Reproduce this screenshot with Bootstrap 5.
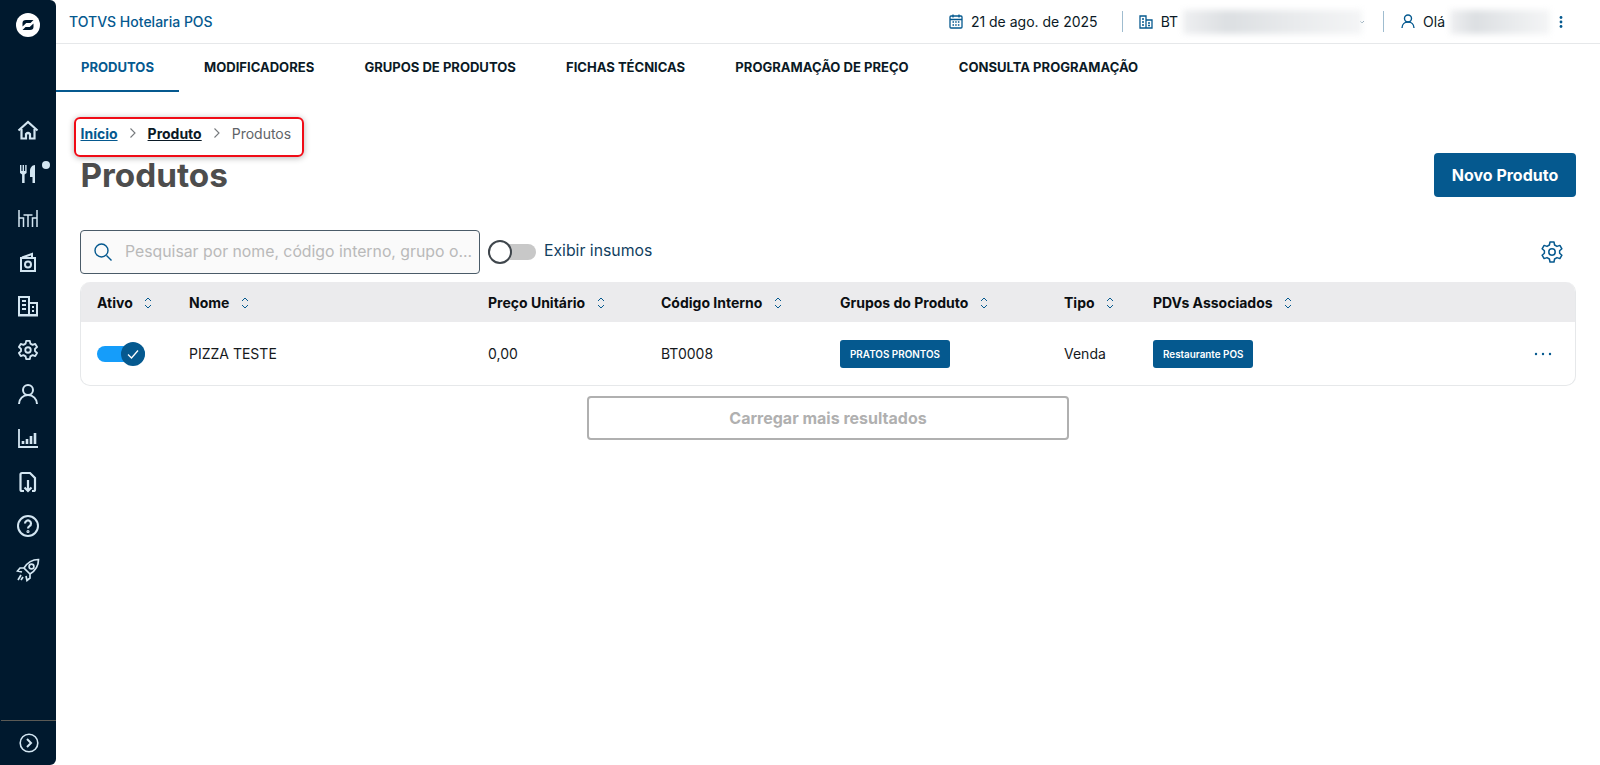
<!DOCTYPE html>
<html lang="pt-BR">
<head>
  <meta charset="UTF-8">
  <title>Produtos</title>
  <link href="https://cdn.jsdelivr.net/npm/bootstrap@5.3.3/dist/css/bootstrap.min.css" rel="stylesheet">
  <style>
    html, body { height: 100%; }
    body { font-family: Inter, "Liberation Sans", sans-serif; color: #0b1a26; overflow: hidden; background: #fff; }
    .app-shell { height: 765px; }
    .side-rail { width: 56px; flex: 0 0 56px; background: #00192e; border-radius: 0 6px 6px 0; color: #d3e6f2; }
    .side-logo { height: 50px; }
    .side-menu { padding-top: 58px; }
    .side-item { height: 44px; position: relative; }
    .side-dot { position: absolute; top: 9px; left: 42px; width: 8px; height: 8px; border-radius: 50%; background: #d3e6f2; }
    .side-foot { height: 45px; border-top: 1px solid #5b5a55; margin-left: 1px; }
    .main-area { min-width: 0; position: relative; }
    .top-bar { height: 44px; border-bottom: 1px solid #e6e8ea; padding: 0 37px 0 13px; font-size: 14px; }
    .app-name { color: #05598f; font-size: 14px; font-weight: 500; }
    .top-sep { width: 1px; height: 21px; background: #9fbccf; }
    .blur-box { height: 24px; background: linear-gradient(90deg, #eeeff1, #dcdfe2 25%, #e8eaec 60%, #f4f5f6); filter: blur(3px); }
    .blur-org { width: 179px; margin-left: 5px; }
    .blur-user { width: 100px; margin-left: 5px; }
    .tab-row { height: 48px; }
    .tab-row .nav-link { font-size: 13.05px; font-weight: 700; color: #0b1a26; padding: 0 25.1px; height: 48px; line-height: 46px; border-bottom: 2px solid transparent; border-radius: 0; }
    .tab-row .nav-link.active { color: #05598f; border-bottom-color: #05598f; padding: 0 25px; }
    .content-pad { padding: 0 24px 0 24px; }
    .crumb-row { padding-top: 31px; height: 62px; font-size: 14px; margin: 0; padding-left: .5px; }
    .crumb-row a { font-weight: 700; color: #0b1a26; text-decoration: underline; }
    .crumb-row a.first-crumb { color: #05598f; }
    .crumb-now { color: #5f6468; }
    .crumb-sep { margin: 4px 9px 0; }
    .red-mark { position: absolute; left: 18px; top: 117px; width: 230px; height: 40px; border: 2px solid #f00c17; border-radius: 6px; box-shadow: 0 1px 6px rgba(0,0,0,.3); }
    .page-title { font-size: 33.3px; font-weight: 700; color: #4d4d4d; margin: 8px 0 0 .5px; line-height: 44px; }
    .title-row { margin-top: -9px; height: 72px; }
    .new-btn { background: #05598f; border: 0; color: #fff; font-weight: 700; font-size: 16px; width: 142px; height: 44px; border-radius: 4px; margin-top: 8px; }
    .new-btn:hover { background: #05598f; color: #fff; }
    .tool-row { margin-top: 13px; height: 44px; }
    .search-wrap { width: 400px; height: 44px; border: 1px solid #4a5b68; border-radius: 4px; padding: 0 6px 0 12px; background: #fafafa; }
    .search-wrap input { border: 0; background: transparent; outline: 0; font-size: 15.8px; flex: 1; min-width: 0; padding: 0; }
    .search-wrap input::placeholder { color: #b9b9b9; }
    .toggle-off { width: 48px; height: 16px; margin-left: 8px; background: #c8c8c8; border-radius: 8px; position: relative; }
    .toggle-knob { position: absolute; left: 0; top: -4px; width: 24px; height: 24px; border-radius: 50%; background: #fff; border: 2px solid #3f464c; }
    .toggle-label { font-size: 15.8px; color: #123f5f; margin-left: 8px; margin-top: -3px; }
    .gear-btn { margin-right: 12px; }
    .grid-box { margin-top: 8px; border: 1px solid #e6e8ea; border-top: 0; border-radius: 10px; overflow: hidden; }
    .grid-table { table-layout: fixed; width: 100%; margin: 0; }
    .grid-table th { background: #ebebed; font-size: 14px; font-weight: 700; height: 40px; padding: 0 0 0 16px; vertical-align: middle; border: 0; color: #0b0f12; }
    .grid-table td { font-size: 14px; height: 63px; padding: 0 0 0 16px; vertical-align: middle; border: 0; color: #15191c; }
    .sort-ico { margin-left: 8px; vertical-align: -2px; }
    .grid-tag { background: #05598f; color: #fff; font-size: 9.9px; font-weight: 600; height: 28px; line-height: 28px; border-radius: 3px; display: inline-block; padding: 0 10px; }
    .on-toggle { width: 48px; height: 16px; background: #159dfa; border-radius: 8px; position: relative; }
    .on-knob { position: absolute; left: 24px; top: -4px; width: 24px; height: 24px; border-radius: 50%; background: #05598f; display: flex; align-items: center; justify-content: center; }
    .row-more { margin-right: 23px; }
    .load-btn { width: 482px; height: 44px; border: 2px solid #b0b0b0; border-radius: 4px; background: #fff; color: #b0b0b0; font-weight: 700; font-size: 16px; margin: 10px auto 0 507px; display: block; }
  </style>
</head>
<body>
  <div class="app-shell d-flex">
    <aside class="side-rail d-flex flex-column">
      <div class="side-logo d-flex align-items-center justify-content-center">
        <svg width="24" height="24" viewBox="0 0 24 24"><circle cx="12" cy="12" r="12" fill="#fff"/><path d="M6.500 13.500V10Q6.500 7 10 7h7.500l-3 3H10.300z" fill="#00192e"/><path d="M6.500 13.500V10Q6.500 7 10 7h7.500l-3 3H10.300z" fill="#00192e" transform="rotate(180 12 12)"/></svg>
      </div>
      <div class="side-menu d-flex flex-column flex-grow-1">
        <div class="side-item d-flex align-items-center justify-content-center">
          <svg width="22" height="22" viewBox="0 0 22 22" fill="none" stroke="#d3e6f2" stroke-width="2.200"><path d="M1.500 11.500 11 3l9.500 8.500"/><path d="M4.500 10v9.500H9V15q2-2 4 0v4.500h4.500V10"/></svg>
        </div>
        <div class="side-item d-flex align-items-center justify-content-center">
          <svg width="22" height="22" viewBox="0 0 22 22" fill="#d3e6f2"><path d="M3 2h1.400v6h1.200V2H7v6h1.200V2h1.400v8l-2 1.500V20H5.100v-8.500L3 10z"/><path d="M18 2v18h-2.500v-6H13V8c0-3 2-6 5-6z"/></svg>
          <span class="side-dot"></span>
        </div>
        <div class="side-item d-flex align-items-center justify-content-center">
          <svg width="22" height="22" viewBox="0 0 22 22" fill="none" stroke="#d3e6f2" stroke-width="1.500"><path d="M2 3v17M2 11h4.500v9M20 3v17M20 11h-4.500v9M6.500 8h9M11 8v12"/></svg>
        </div>
        <div class="side-item d-flex align-items-center justify-content-center">
          <svg width="22" height="22" viewBox="0 0 22 22" fill="none" stroke="#d3e6f2" stroke-width="2"><path d="M4 7h14v13H4z"/><path d="M5 6.500 15 3v4"/><circle cx="11" cy="13.500" r="3"/></svg>
        </div>
        <div class="side-item d-flex align-items-center justify-content-center">
          <svg width="22" height="22" viewBox="0 0 22 22" fill="none" stroke="#d3e6f2" stroke-width="2"><path d="M2 20V2h10v18zM12 8h8v12h-8M1 20.500h20"/><path d="M5 6h4M5 10h4M5 14h4M15 12h2M15 16h2" stroke-width="1.800"/></svg>
        </div>
        <div class="side-item d-flex align-items-center justify-content-center">
          <svg width="22" height="22" viewBox="0 0 24 24" fill="none" stroke="#d3e6f2" stroke-width="2"><circle cx="12" cy="12" r="3"/><path d="M10 2h4l.6 3 2.400 1.400 2.900-1 2 3.400-2.300 2v2.400l2.300 2-2 3.400-2.900-1-2.400 1.400-.6 3h-4l-.6-3L7 17.600l-2.900 1-2-3.400 2.300-2v-2.400l-2.300-2 2-3.400 2.900 1L9.400 5z" stroke-linejoin="round"/></svg>
        </div>
        <div class="side-item d-flex align-items-center justify-content-center">
          <svg width="22" height="22" viewBox="0 0 22 22" fill="none" stroke="#d3e6f2" stroke-width="2"><circle cx="11" cy="7" r="5"/><path d="M2 21c0-5 4-9 9-9s9 4 9 9"/></svg>
        </div>
        <div class="side-item d-flex align-items-center justify-content-center">
          <svg width="22" height="22" viewBox="0 0 22 22" fill="none" stroke="#d3e6f2"><path d="M2 2v18h19" stroke-width="1.800"/><path d="M6 17v-3M10 17v-5M14 17V9M18 17V6" stroke-width="2.600"/></svg>
        </div>
        <div class="side-item d-flex align-items-center justify-content-center">
          <svg width="22" height="22" viewBox="0 0 22 22" fill="none" stroke="#d3e6f2" stroke-width="2.200"><path d="M7 20H5a1.500 1.500 0 0 1-1.500-1.500v-15A1.500 1.500 0 0 1 5 2h8l5 5v11.500a1.500 1.500 0 0 1-1.500 1.500H15"/><path d="M11 9v11M7.500 16.500 11 20l3.500-3.500"/></svg>
        </div>
        <div class="side-item d-flex align-items-center justify-content-center">
          <svg width="24" height="24" viewBox="0 0 24 24" fill="none" stroke="#d3e6f2" stroke-width="2"><circle cx="12" cy="12" r="10"/><path d="M9 9.500a3 3 0 1 1 4.500 2.600c-1 .6-1.500 1.200-1.500 2.400" stroke-width="2.200"/><circle cx="12" cy="17.500" r=".6"/></svg>
        </div>
        <div class="side-item d-flex align-items-center justify-content-center">
          <svg width="24" height="24" viewBox="0 0 24 24" fill="none" stroke="#d3e6f2" stroke-width="1.700"><path d="M22.500 1.500c-6 0-10.500 2-14.500 8.500l6 6c6.500-4 8.500-8.500 8.500-14.500zM8 10H4l-2.500 3 4.500 1M14 16v4l-3 2.500-1-4.500M5 17l-3 5M7 19l-2 3"/><circle cx="15.500" cy="8.500" r="2.400"/></svg>
        </div>
      </div>
      <div class="side-foot d-flex align-items-center justify-content-center">
        <svg width="20" height="20" viewBox="0 0 20 20" fill="none" stroke="#d3e6f2" stroke-width="2"><circle cx="10" cy="10" r="8.800" stroke-width="1.600"/><path d="M8 6l4 4-4 4"/></svg>
      </div>
    </aside>

    <div class="main-area flex-grow-1">
      <header class="top-bar d-flex align-items-center">
        <span class="app-name">TOTVS Hotelaria POS</span>
        <div class="ms-auto d-flex align-items-center">
          <svg width="14" height="15" viewBox="0 0 14 15" fill="none" stroke="#05598f" stroke-width="1.300" class="me-2"><rect x="1" y="2" width="12" height="12" rx="1"/><path d="M1 5.500h12M4 .5v3M10 .5v3"/><path d="M3.500 8h7M3.500 11h7" stroke-dasharray="1.500 1.200"/></svg>
          <span>21 de ago. de 2025</span>
          <span class="top-sep ms-4"></span>
          <svg width="14" height="14" viewBox="0 0 14 14" fill="none" stroke="#05598f" stroke-width="1.300" class="ms-3"><path d="M1 13V1h6v12zM7 5h6v8H7M3 4h2M3 7h2M3 10h2M9 8h2M9 10.500h2"/></svg>
          <span class="ms-2">BT</span>
          <span class="blur-box blur-org"></span>
          <svg width="6" height="4" viewBox="0 0 6 4" fill="none" stroke="#6f8da3" style="margin-left:-3px"><path d="M1 1l2 2 2-2"/></svg>
          <span class="top-sep" style="margin-left:18px"></span>
          <svg width="14" height="15" viewBox="0 0 14 15" fill="none" stroke="#05598f" stroke-width="1.400" style="margin-left:17px"><circle cx="7" cy="4.500" r="3.500"/><path d="M1 14c0-3.500 2.500-6 6-6s6 2.500 6 6"/></svg>
          <span class="ms-2">Olá</span>
          <span class="blur-box blur-user"></span>
          <svg width="4" height="14" viewBox="0 0 4 14" fill="#05598f" style="margin-left:9px"><circle cx="2" cy="2.500" r="1.400"/><circle cx="2" cy="7" r="1.400"/><circle cx="2" cy="11.500" r="1.400"/></svg>
        </div>
      </header>

      <ul class="nav tab-row">
        <li class="nav-item"><a class="nav-link active" href="#">PRODUTOS</a></li>
        <li class="nav-item"><a class="nav-link" href="#">MODIFICADORES</a></li>
        <li class="nav-item"><a class="nav-link" href="#">GRUPOS DE PRODUTOS</a></li>
        <li class="nav-item"><a class="nav-link" href="#">FICHAS TÉCNICAS</a></li>
        <li class="nav-item"><a class="nav-link" href="#">PROGRAMAÇÃO DE PREÇO</a></li>
        <li class="nav-item"><a class="nav-link" href="#">CONSULTA PROGRAMAÇÃO</a></li>
      </ul>

      <div class="red-mark"></div>

      <main class="content-pad">
        <nav class="crumb-row d-flex align-items-start">
          <a class="first-crumb" href="#">Início</a>
          <svg class="crumb-sep" width="12" height="12" viewBox="0 0 12 12" fill="none" stroke="#75797c" stroke-width="1.100"><path d="M3.500 1.500 8 6l-4.500 4.500"/></svg>
          <a href="#">Produto</a>
          <svg class="crumb-sep" width="12" height="12" viewBox="0 0 12 12" fill="none" stroke="#75797c" stroke-width="1.100"><path d="M3.500 1.500 8 6l-4.500 4.500"/></svg>
          <span class="crumb-now">Produtos</span>
        </nav>

        <div class="title-row d-flex justify-content-between align-items-start">
          <h1 class="page-title">Produtos</h1>
          <button class="btn new-btn" type="button">Novo Produto</button>
        </div>

        <div class="tool-row d-flex align-items-center">
          <label class="search-wrap d-flex align-items-center gap-2 mb-0">
            <svg width="20" height="20" viewBox="0 0 20 20" fill="none" stroke="#05598f" stroke-width="1.400" class="me-1"><circle cx="8.500" cy="8.500" r="6.500"/><path d="M13.500 13.500 18.500 18.500"/></svg>
            <input type="text" placeholder="Pesquisar por nome, código interno, grupo o...">
          </label>
          <div class="toggle-off"><span class="toggle-knob"></span></div>
          <span class="toggle-label">Exibir insumos</span>
          <svg class="ms-auto gear-btn" width="24" height="24" viewBox="0 0 24 24" fill="none" stroke="#05598f" stroke-width="1.500"><circle cx="12" cy="12" r="3.200"/><path d="M10 2h4l.6 3 2.400 1.400 2.900-1 2 3.400-2.300 2v2.400l2.300 2-2 3.400-2.900-1-2.400 1.400-.6 3h-4l-.6-3L7 17.600l-2.900 1-2-3.400 2.300-2v-2.400l-2.300-2 2-3.400 2.900 1L9.400 5z" stroke-linejoin="round"/></svg>
        </div>

        <div class="grid-box">
          <table class="table grid-table">
            <colgroup><col style="width:92px"><col style="width:299px"><col style="width:173px"><col style="width:179px"><col style="width:224px"><col style="width:89px"><col></colgroup>
            <thead>
              <tr id="gridHead"></tr>
            </thead>
            <tbody>
              <tr>
                <td><div class="on-toggle"><span class="on-knob"><svg width="14" height="14" viewBox="0 0 14 14" fill="none" stroke="#fff" stroke-width="1.300"><path d="M2 7.500 5.500 11 12 3.500"/></svg></span></div></td>
                <td>PIZZA TESTE</td>
                <td>0,00</td>
                <td>BT0008</td>
                <td><span class="grid-tag">PRATOS PRONTOS</span></td>
                <td>Venda</td>
                <td>
                  <div class="d-flex justify-content-between align-items-center">
                    <span class="grid-tag">Restaurante POS</span>
                    <svg class="row-more" width="18" height="4" viewBox="0 0 18 4" fill="#05598f"><circle cx="2" cy="2" r="1.200"/><circle cx="9" cy="2" r="1.200"/><circle cx="16" cy="2" r="1.200"/></svg>
                  </div>
                </td>
              </tr>
            </tbody>
          </table>
        </div>

        <button class="load-btn" type="button">Carregar mais resultados</button>
      </main>
    </div>
  </div>

  <script>
    // Table header cells share the same sort arrows
    const headers = ['Ativo', 'Nome', 'Preço Unitário', 'Código Interno', 'Grupos do Produto', 'Tipo', 'PDVs Associados'];
    const sortIcon = '<svg class="sort-ico" width="8" height="14" viewBox="0 0 8 14" fill="none" stroke="#05598f" stroke-width="1"><path d="M1 5 4 2l3 3M1 9l3 3 3-3"/></svg>';
    document.getElementById('gridHead').innerHTML = headers.map(h => `<th>${h} ${sortIcon}</th>`).join('');
  </script>
  <script src="https://cdn.jsdelivr.net/npm/bootstrap@5.3.3/dist/js/bootstrap.bundle.min.js"></script>
</body>
</html>
